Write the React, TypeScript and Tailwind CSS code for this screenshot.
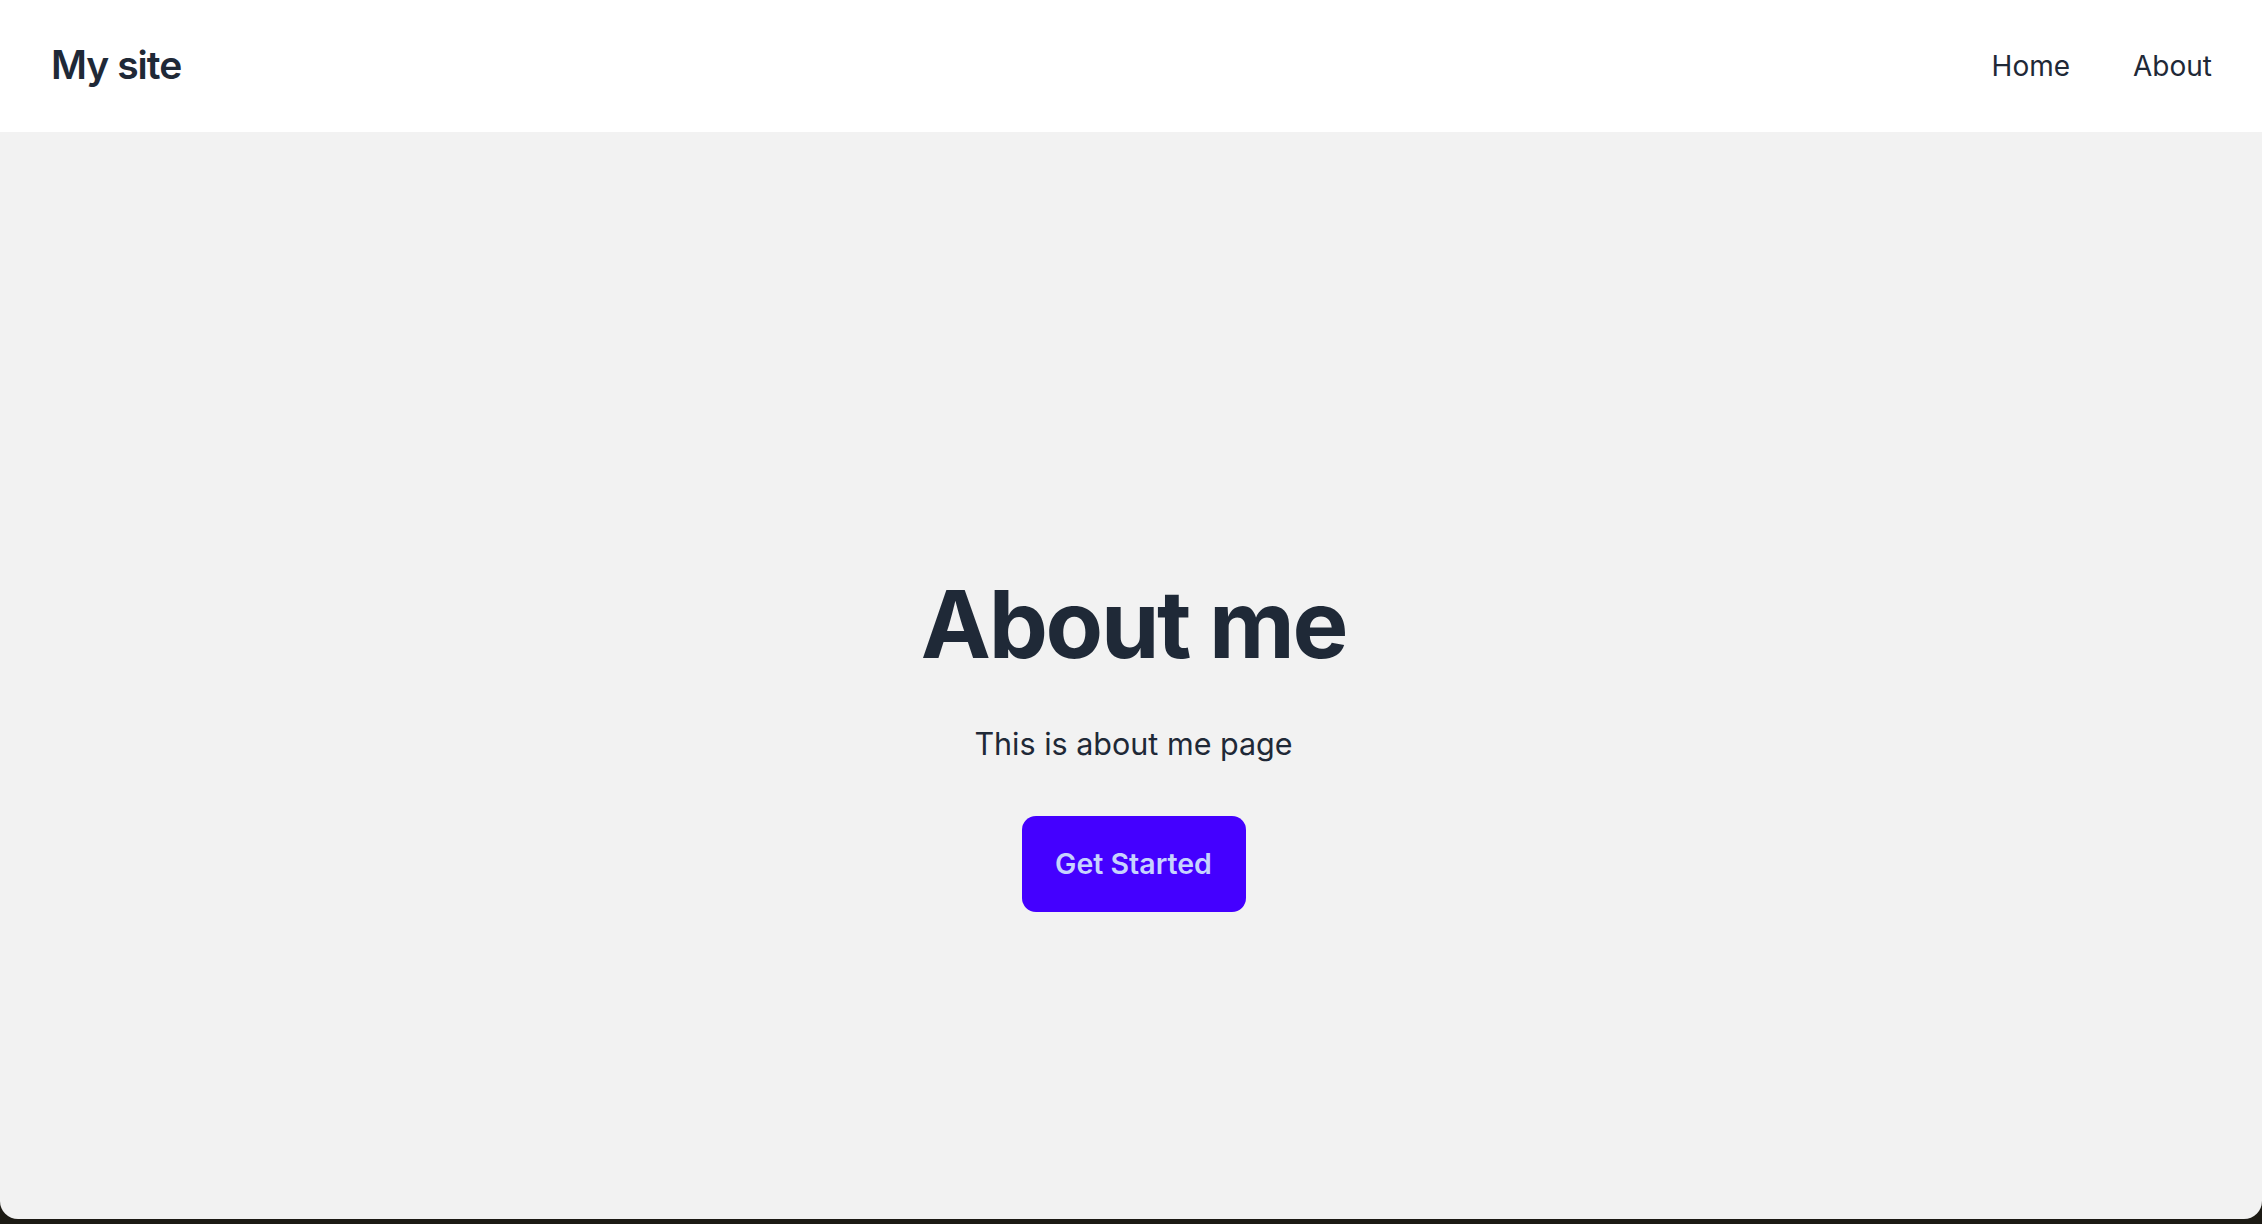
export default function App() {
  return (
    <div className="h-screen bg-[#1c1a14] font-['Inter',sans-serif] text-[#1f2937]">
      <div className="flex flex-col h-[1219px] bg-[#f2f2f2] rounded-b-[18px] overflow-hidden">
        <header className="flex flex-row items-center justify-between h-[132px] pl-[51px] pr-[50px] bg-white">
          <h1 className="-mt-[2px] text-[39px] font-semibold tracking-tight">My site</h1>
          <nav className="flex flex-row gap-[63px] text-[28px]">
            <a href="#">Home</a>
            <a href="#">About</a>
          </nav>
        </header>
        <main className="flex flex-col flex-1 items-center justify-center pt-[138px] pl-[5px]">
          <h2 className="text-[94px] font-bold leading-none tracking-tight">
            About me
          </h2>
          <p className="mt-[50px] text-[30.5px]">This is about me page</p>
          <button className="mt-[49px] w-[224px] h-[96px] rounded-[14px] bg-[#4400ff] text-[28.5px] font-semibold text-[#c7d2fe]">
            Get Started
          </button>
        </main>
      </div>
    </div>
  );
}
